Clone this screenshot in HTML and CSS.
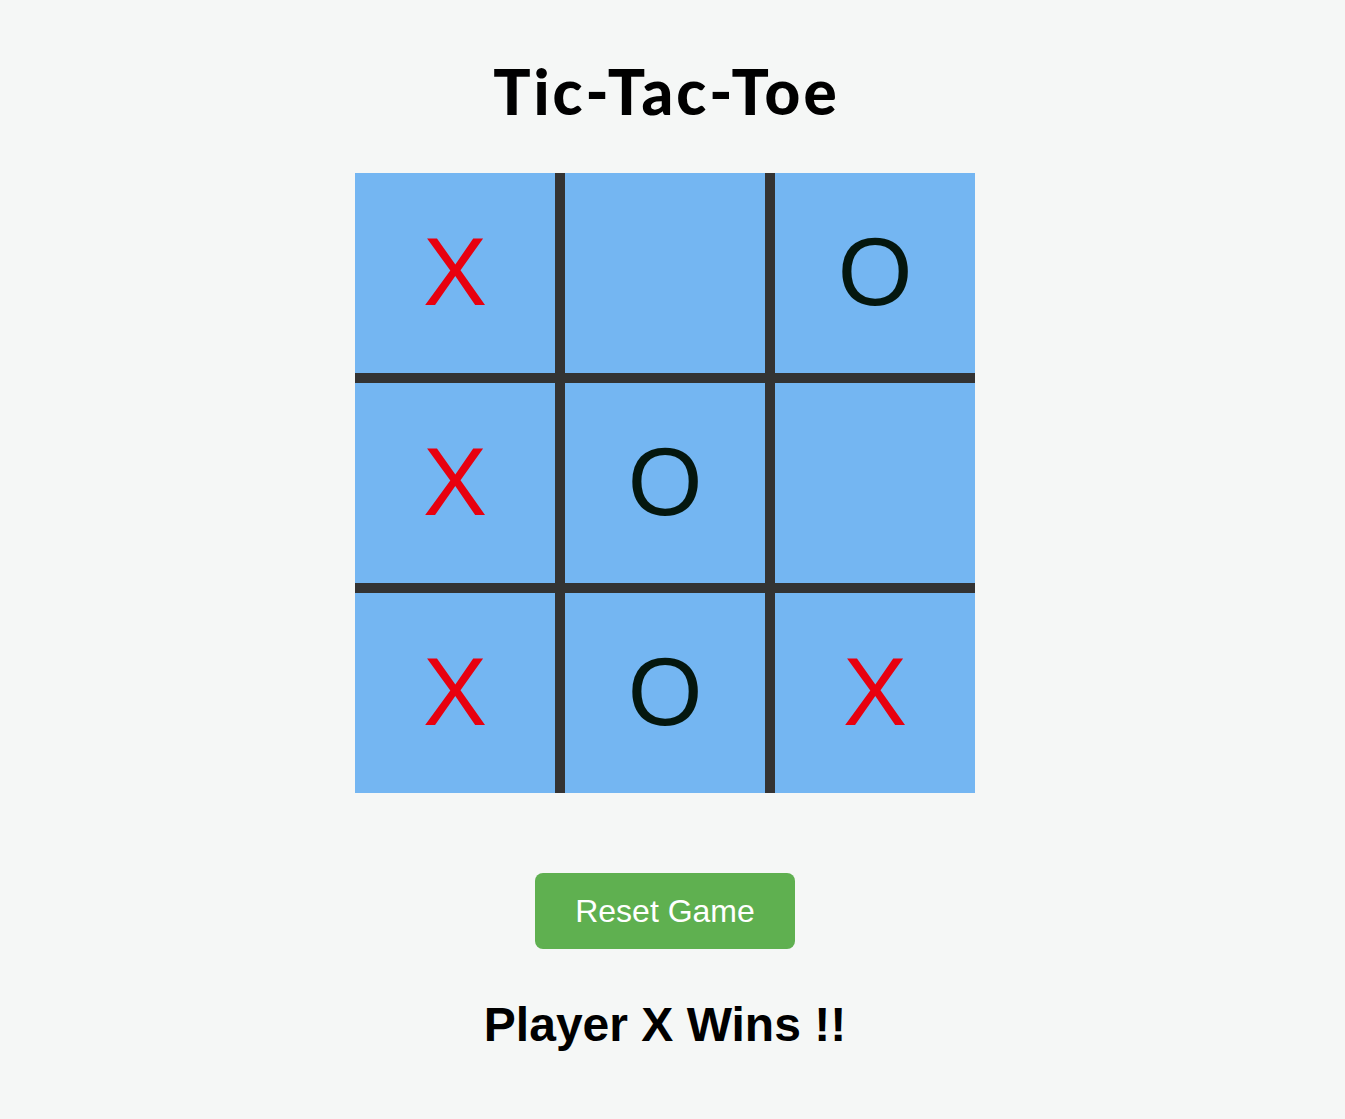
FILE: index.html
```html
<!DOCTYPE html>
<html lang="en">
<head>
<meta charset="utf-8">
<title>Tic-Tac-Toe</title>
<link rel="stylesheet" href="styles.css">
</head>
<body>
<main class="app">
  <h1 class="title">Tic-Tac-Toe</h1>
  <div class="board">
    <div class="cell x">X</div>
    <div class="cell"></div>
    <div class="cell o">O</div>
    <div class="cell x">X</div>
    <div class="cell o">O</div>
    <div class="cell"></div>
    <div class="cell x">X</div>
    <div class="cell o">O</div>
    <div class="cell x">X</div>
  </div>
  <button class="reset" type="button">Reset Game</button>
  <p class="status">Player X Wins !!</p>
</main>
</body>
</html>
```

FILE: styles.css
```css
html, body {
  margin: 0;
  padding: 0;
}

body {
  background: #f5f7f6;
  font-family: "Liberation Sans", Arial, sans-serif;
  min-height: 1119px;
}

.app {
  display: flex;
  flex-direction: column;
  align-items: center;
  margin-right: 15px;
}

.title {
  margin: 60px 0 0;
  padding-left: 3px;
  font-family: Lato, "Open Sans", sans-serif;
  font-weight: 900;
  font-size: 62px;
  line-height: 1;
  letter-spacing: 3px;
  color: #000;
}

.board {
  margin-top: 51px;
  display: grid;
  grid-template-columns: repeat(3, 200px);
  grid-template-rows: repeat(3, 200px);
  gap: 10px;
  background: #333;
}

.cell {
  background: #74b6f2;
  display: flex;
  align-items: center;
  justify-content: center;
  padding-bottom: 2px;
  font-family: "Liberation Sans", Arial, sans-serif;
  font-size: 96px;
}

.cell.x {
  color: #e8000f;
}

.cell.o {
  color: #04170f;
}

.reset {
  margin-top: 80px;
  padding: 20px 40px;
  font-family: "Liberation Sans", Arial, sans-serif;
  font-size: 32px;
  line-height: 36px;
  color: #fff;
  background: #5fb050;
  border: none;
  border-radius: 8px;
}

.status {
  margin: 48px 0 0;
  font-size: 48px;
  font-weight: bold;
  color: #000;
}
```
